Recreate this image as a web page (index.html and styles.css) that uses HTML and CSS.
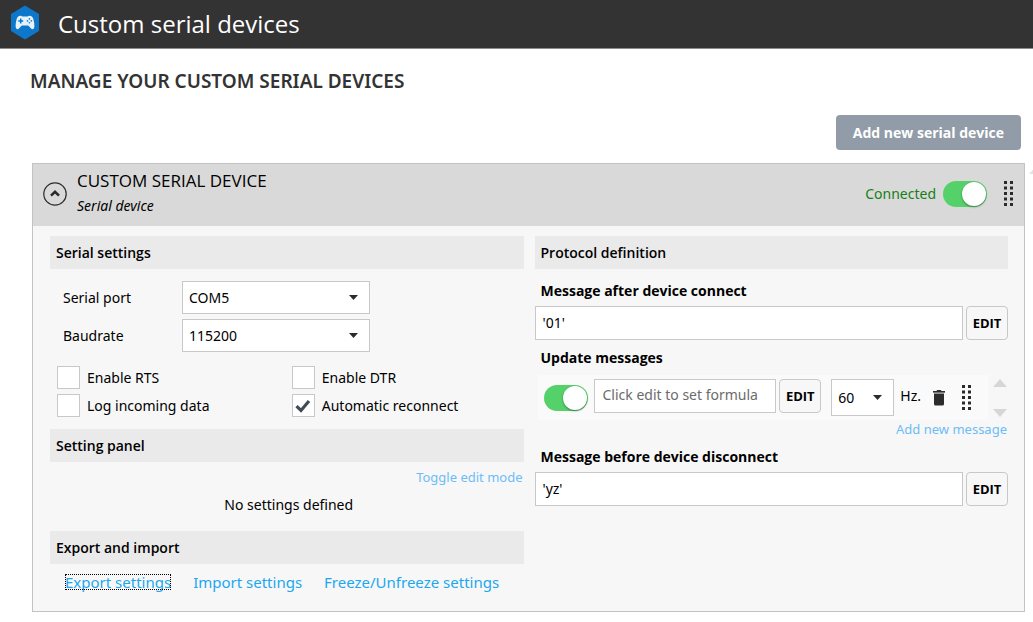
FILE: index.html
```html
<!DOCTYPE html>
<html lang="en">
<head>
<meta charset="utf-8">
<title>Custom serial devices</title>
<link rel="stylesheet" href="styles.css">
</head>
<body>
<svg class="defs" aria-hidden="true">
  <symbol id="grip" viewBox="0 0 10 26">
    <path d="M0 0h3v3H0zM6 0h3v3H6zM0 5.5h3v3H0zM6 5.5h3v3H6zM0 11h3v3H0zM6 11h3v3H6zM0 16.5h3v3H0zM6 16.5h3v3H6zM0 22h3v3H0zM6 22h3v3H6z"/>
  </symbol>
  <symbol id="caret" viewBox="0 0 9 5"><path d="M0 0h9L4.500 5z"/></symbol>
</svg>
<header class="topbar">
  <svg class="logo" viewBox="0 0 30 36" aria-hidden="true">
    <path fill="#0c77cb" d="M15 0.500 29 9v17L15 34.500 1 26V9z"/>
    <g transform="translate(0 1)">
      <path fill="#e6f1fa" d="M9 10q2-.9 3.400.4h5.200q1.400-1.300 3.400-.4 1.600.5 2.200 2.600 1.300 4.500 1.200 8-.1 2.600-1.900 2.600-1 0-1.900-1.200L18.200 19.500h-6.400l-2.400 2.500q-.9 1.200-1.900 1.200-1.800 0-1.900-2.600-.1-3.500 1.200-8 .6-2.100 2.200-2.600z"/>
      <path fill="#0c77cb" d="M10 12.500h1.500v1.700h1.700v1.500h-1.700v1.700H10v-1.700H8.300v-1.500H10z"/>
      <circle cx="19.400" cy="12.900" r=".8" fill="#0c77cb"/><circle cx="21.300" cy="14.900" r=".8" fill="#0c77cb"/><circle cx="17.500" cy="14.900" r=".8" fill="#0c77cb"/><circle cx="19.400" cy="16.800" r=".8" fill="#0c77cb"/>
    </g>
  </svg>
  <h1 class="topbar-title">Custom serial devices</h1>
</header>
<main class="page">
  <h2 class="page-title">MANAGE YOUR CUSTOM SERIAL DEVICES</h2>
  <div class="actions"><button class="add-device" type="button">Add new serial device</button></div>
  <article class="device">
    <svg class="page-scroll" viewBox="0 0 14 8" aria-hidden="true"><path d="M7 0l7 8H0z"/></svg>
    <header class="device-head">
      <button class="collapse" type="button" aria-label="Collapse">
        <svg viewBox="0 0 24 24"><circle cx="12" cy="12" r="11.200" fill="none" stroke="#2b2b2b" stroke-width="1.200"/><path d="M8 13.600 12 9.800l4 3.800" fill="none" stroke="#2b2b2b" stroke-width="2.600"/></svg>
      </button>
      <div class="device-name">
        <h3 class="device-title">CUSTOM SERIAL DEVICE</h3>
        <p class="device-type">Serial device</p>
      </div>
      <label class="connection">Connected <input class="toggle" type="checkbox" checked></label>
      <svg class="grip" aria-hidden="true"><use href="#grip"/></svg>
    </header>
    <div class="columns">
      <div class="column">
        <h4 class="section">Serial settings</h4>
        <div class="fields">
          <label for="port">Serial port</label>
          <span class="picker"><select id="port"><option>COM5</option></select><svg class="caret"><use href="#caret"/></svg></span>
          <label for="baud">Baudrate</label>
          <span class="picker"><select id="baud"><option>115200</option></select><svg class="caret"><use href="#caret"/></svg></span>
        </div>
        <div class="checks">
          <label class="check"><input type="checkbox">Enable RTS</label>
          <label class="check"><input type="checkbox">Enable DTR</label>
          <label class="check"><input type="checkbox">Log incoming data</label>
          <label class="check"><span class="tick-box"><input type="checkbox" checked><svg class="tick" viewBox="0 0 16 14"><path d="M1.500 7.200 6 11.500 14 2" fill="none" stroke="#424c57" stroke-width="3.200"/></svg></span>Automatic reconnect</label>
        </div>
        <h4 class="section">Setting panel</h4>
        <div class="link-end"><a class="soft-link" href="#">Toggle edit mode</a></div>
        <p class="empty">No settings defined</p>
        <h4 class="section">Export and import</h4>
        <nav class="links">
          <a class="focused" href="#">Export settings</a>
          <a href="#">Import settings</a>
          <a href="#">Freeze/Unfreeze settings</a>
        </nav>
      </div>
      <div class="column">
        <h4 class="section">Protocol definition</h4>
        <label class="caption" for="after">Message after device connect</label>
        <div class="message">
          <input class="formula" id="after" type="text" value="'01'">
          <button class="edit" type="button">EDIT</button>
        </div>
        <h5 class="caption update-caption">Update messages</h5>
        <div class="updates">
          <div class="update">
            <input class="toggle" type="checkbox" checked aria-label="Message enabled">
            <div class="message">
              <input class="formula" type="text" placeholder="Click edit to set formula" aria-label="Update message">
              <button class="edit" type="button">EDIT</button>
            </div>
            <span class="picker rate"><select id="rate" aria-label="Rate"><option>60</option></select><svg class="caret"><use href="#caret"/></svg></span>
            <label class="unit" for="rate">Hz.</label>
            <button class="trash" type="button" aria-label="Delete message">
              <svg viewBox="0 0 12 16"><path fill="#777" d="M0 1h3.500l1-1h3l1 1H12v2H0z"/><path fill="#2b2b2b" d="M0 1h3.500l1-1h3l1 1H12v1H0zM1 3.500h10V14q0 1.500-1.500 1.500h-7Q1 15.500 1 14z"/></svg>
            </button>
            <svg class="grip" aria-hidden="true"><use href="#grip"/></svg>
          </div>
          <div class="scroller" aria-hidden="true">
            <svg viewBox="0 0 14 8"><path d="M7 0l7 8H0z"/></svg>
            <svg viewBox="0 0 14 8"><path d="M0 0h14L7 8z"/></svg>
          </div>
        </div>
        <div class="link-end"><a class="soft-link" href="#">Add new message</a></div>
        <label class="caption" for="before">Message before device disconnect</label>
        <div class="message">
          <input class="formula" id="before" type="text" value="'yz'">
          <button class="edit" type="button">EDIT</button>
        </div>
      </div>
    </div>
  </article>
</main>
</body>
</html>
```
FILE: styles.css
```css
* { box-sizing: border-box; }
body {
  margin: 0;
  background: #fff;
  color: #000;
  font: 14px/20px "Noto Sans", "Open Sans", sans-serif;
}
h1, h2, h3, h4, h5, p { margin: 0; }
button, input, select { font: inherit; color: inherit; margin: 0; }
svg { display: block; }
a { text-decoration: none; }
.defs { position: absolute; width: 0; height: 0; }

.topbar {
  display: flex;
  align-items: center;
  gap: 18px;
  height: 49px;
  padding: 0 10px;
  background: #333;
  border-bottom: 1px solid #8c8c8c;
}
.logo { width: 30px; height: 36px; margin-bottom: 2px; }
.topbar-title, .device-title, .section, .caption, .add-device, .edit { font-family: "Open Sans", "Noto Sans", sans-serif; }
.topbar-title { color: #fff; font-size: 24px; line-height: 32px; font-weight: 400; }

.page { padding: 20px 8px 11px 32px; overflow-x: clip; }
.page-title { margin-left: -2px; color: #333; font-size: 19px; line-height: 24px; font-weight: 600; }
.actions { display: flex; justify-content: flex-end; padding: 22px 4px 13px; }
.add-device {
  height: 35px;
  padding: 0 17px;
  border: 0;
  border-radius: 4px;
  background: #919ca8;
  color: #fff;
  font-weight: 700;
}

.device { position: relative; border: 1px solid #c3c3c3; background: #f7f7f7; }
.page-scroll { position: absolute; top: 2px; right: -19px; width: 14px; height: 8px; fill: #e2e2e2; }
.device-head {
  display: flex;
  align-items: center;
  height: 62px;
  padding: 0 10px 2px;
  background: #d9d9d9;
}
.collapse { width: 24px; height: 24px; padding: 0; border: 0; background: none; }
.device-name { flex: 1; margin-left: 10px; }
.device-title { font-size: 17px; line-height: 24px; font-weight: 400; }
.device-type { line-height: 26px; font-style: italic; }
.connection { display: flex; align-items: center; gap: 7px; color: #168016; }
.grip { width: 10px; height: 26px; fill: #2b2b2b; }
.device-head .grip { margin-left: 17px; }

.toggle {
  appearance: none;
  flex: none;
  display: flex;
  justify-content: flex-end;
  width: 44px;
  height: 26px;
  border-radius: 13px;
  background: #54d169;
}
.toggle::before {
  content: "";
  width: 24px;
  height: 24px;
  margin: 1px;
  border-radius: 50%;
  background: #fff;
  box-shadow: 0 1px 2px #0006;
}

.columns {
  display: grid;
  grid-template-columns: minmax(0, 1fr) minmax(0, 1fr);
  gap: 11px;
  padding: 10px 16px 18px 17px;
}
.section {
  height: 33px;
  padding: 0 6px;
  background: #eaeaea;
  font-size: 14px;
  line-height: 33px;
  font-weight: 600;
}
.fields {
  display: grid;
  grid-template-columns: 119px 188px;
  align-items: center;
  gap: 5px 0;
  padding: 12px 13px 14px;
}
.picker { display: grid; align-items: center; }
.picker select, .picker .caret { grid-area: 1 / 1; }
.picker select {
  appearance: none;
  width: 100%;
  height: 33px;
  padding: 0 6px;
  border: 1px solid #c8c8c8;
  border-radius: 0;
  background: #fff;
}
.caret { justify-self: end; width: 9px; height: 5px; margin-right: 12px; fill: #2b2b2b; pointer-events: none; }
.checks {
  display: grid;
  grid-template-columns: 1fr 1fr;
  gap: 5px 3px;
  padding: 0 0 12px 7px;
}
.check { display: flex; align-items: center; gap: 7px; }
.check input {
  appearance: none;
  width: 23px;
  height: 23px;
  border: 1px solid #c8c8c8;
  background: #fff;
}
.tick-box { display: grid; place-items: center; }
.tick-box > * { grid-area: 1 / 1; }
.tick { width: 16px; height: 14px; pointer-events: none; }
.link-end { display: flex; justify-content: flex-end; padding: 0 1px; line-height: 18px; }
.soft-link { color: #6cbcf7; font-size: 13px; }
.column .section + .link-end { padding-top: 6px; }
.empty { padding: 9px 0 16px; margin-left: 4px; text-align: center; }
.links { display: flex; gap: 22px; padding: 10px 15px 3px; font-size: 15px; line-height: 16px; }
.links a { color: #1ba8f0; }
.links .focused { outline: 1px dotted #000; outline-offset: -1px; }

.caption { display: block; padding: 12px 6px 5px; font-size: 14px; line-height: 20px; font-weight: 700; }
.update-caption { padding: 8px 6px 7px; }
.message { display: flex; gap: 3px; flex: 1; min-width: 0; }
.formula {
  flex: 1;
  min-width: 0;
  height: 34px;
  padding: 0 7px 2px;
  border: 1px solid #c8c8c8;
  background: #fff;
}
.formula::placeholder { color: #6b6b6b; opacity: 1; }
.edit {
  width: 42px;
  height: 34px;
  padding: 0;
  border: 1px solid #c8c8c8;
  border-radius: 4px;
  background: #f7f7f7;
  font-size: 13px;
  font-weight: 700;
}
.updates { display: flex; gap: 5px; padding: 0 1px 0 3px; }
.update {
  flex: 1;
  min-width: 0;
  display: flex;
  align-items: center;
  height: 45px;
  padding: 0 16px 0 6px;
  background: #fafafa;
}
.update .message { margin: 0 0 4px 6px; }
.update .formula { padding-left: 8px; }
.rate { width: 63px; margin: 0 6px 0 10px; }
.rate select { height: 37px; }
.unit { padding-bottom: 3px; }
.trash { width: 12px; height: 16px; margin: 0 17px 0 12px; padding: 0; border: 0; background: none; }
.scroller { display: flex; flex-direction: column; justify-content: space-between; padding: 4px 0 3px; }
.scroller svg { width: 14px; height: 8px; fill: #d6d6d6; }
.column .updates + .link-end + .caption { padding-top: 9px; }
```
